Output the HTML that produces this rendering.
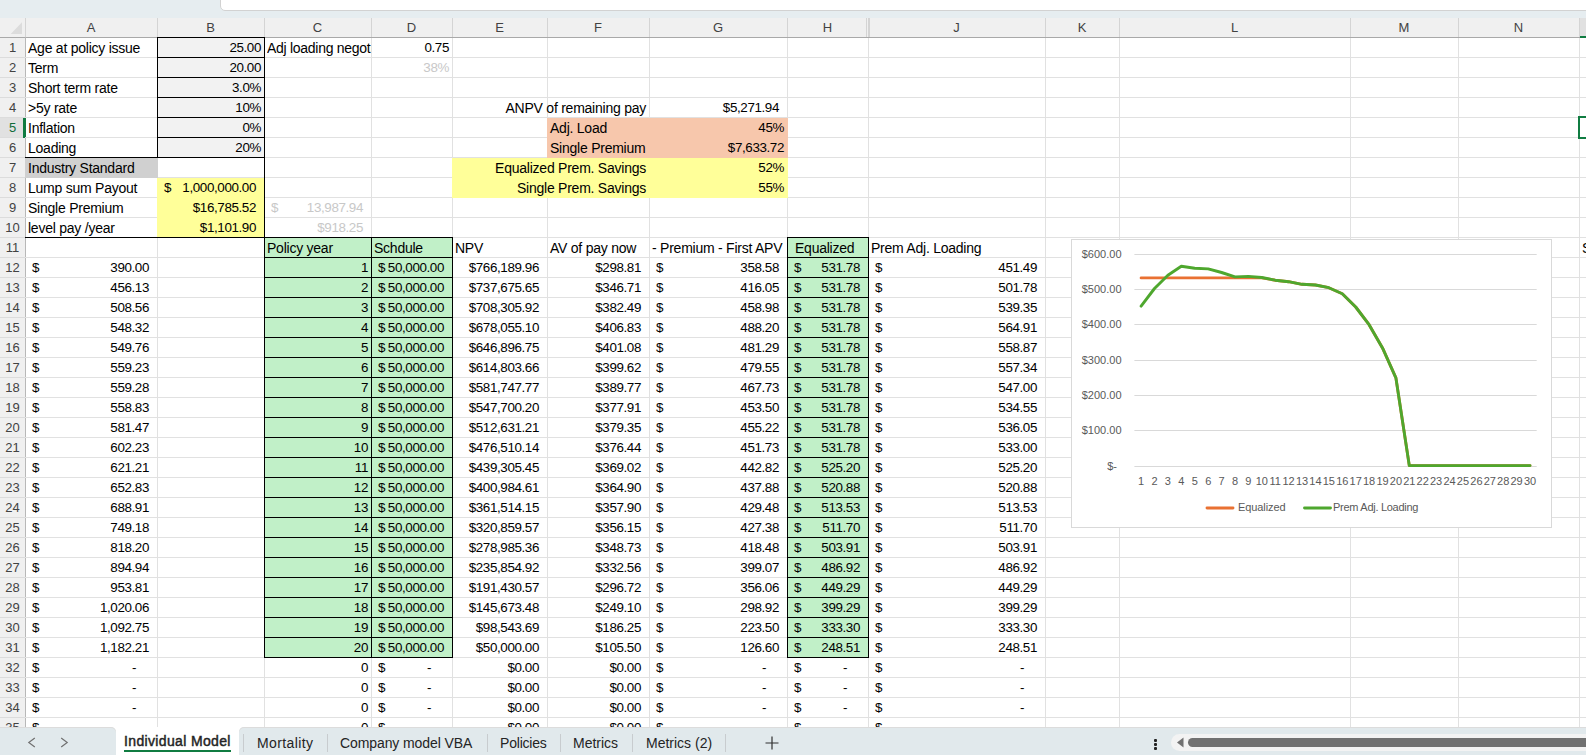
<!DOCTYPE html>
<html><head><meta charset="utf-8"><style>
html,body{margin:0;padding:0}
body{width:1586px;height:755px;overflow:hidden;position:relative;background:#fff;font-family:"Liberation Sans",sans-serif;}
.f{position:absolute}
.t{position:absolute;height:20px;line-height:20px;font-size:13.4px;white-space:nowrap;color:#000}
.ch{position:absolute;top:18px;height:19px;line-height:19px;text-align:center;font-size:13px;color:#424242}
.rh{position:absolute;left:0;width:25px;height:20px;line-height:20px;text-align:center;font-size:13px;color:#424242}
.rh.sel{color:#0f6b38}
.ax{font-family:"Liberation Sans",sans-serif;font-size:11px;fill:#595959}
.tab{position:absolute;top:727px;height:28px;line-height:28px;font-size:14px;color:#242424}
</style></head><body>
<div class="f" style="left:0;top:0;width:1586px;height:18px;background:#e6edf0"></div>
<div class="f" style="left:220px;top:-6px;width:1380px;height:15px;background:#fff;border:1px solid #d2d2d2;border-radius:5px"></div>
<div class="f" style="left:0;top:18px;width:1586px;height:19px;background:#f0f0f0"></div>
<div class="f" style="left:0;top:37px;width:1586px;height:1px;background:#a9a9a9"></div>
<div class="f" style="left:0;top:38px;width:25px;height:689px;background:#f0f0f0"></div>
<div class="f" style="left:25px;top:18px;width:1px;height:19px;background:#d4d4d4"></div>
<div class="f" style="left:25px;top:37px;width:1px;height:690px;background:#b8b8b8"></div>
<svg class="f" style="left:0;top:18px" width="25" height="19"><path d="M22 4.3 L22 16 L10.7 16 Z" fill="#dcdcdc"/></svg>
<div class="ch" style="left:25px;width:132px">A</div><div class="ch" style="left:157px;width:107px">B</div><div class="f" style="left:157px;top:18px;width:1px;height:19px;background:#d4d4d4"></div><div class="ch" style="left:264px;width:107px">C</div><div class="f" style="left:264px;top:18px;width:1px;height:19px;background:#d4d4d4"></div><div class="ch" style="left:371px;width:81px">D</div><div class="f" style="left:371px;top:18px;width:1px;height:19px;background:#d4d4d4"></div><div class="ch" style="left:452px;width:95px">E</div><div class="f" style="left:452px;top:18px;width:1px;height:19px;background:#d4d4d4"></div><div class="ch" style="left:547px;width:102px">F</div><div class="f" style="left:547px;top:18px;width:1px;height:19px;background:#d4d4d4"></div><div class="ch" style="left:649px;width:138px">G</div><div class="f" style="left:649px;top:18px;width:1px;height:19px;background:#d4d4d4"></div><div class="ch" style="left:787px;width:81px">H</div><div class="f" style="left:787px;top:18px;width:1px;height:19px;background:#d4d4d4"></div><div class="ch" style="left:868px;width:177px">J</div><div class="f" style="left:868px;top:18px;width:1px;height:19px;background:#d4d4d4"></div><div class="ch" style="left:1045px;width:74px">K</div><div class="f" style="left:1045px;top:18px;width:1px;height:19px;background:#d4d4d4"></div><div class="ch" style="left:1119px;width:231px">L</div><div class="f" style="left:1119px;top:18px;width:1px;height:19px;background:#d4d4d4"></div><div class="ch" style="left:1350px;width:108px">M</div><div class="f" style="left:1350px;top:18px;width:1px;height:19px;background:#d4d4d4"></div><div class="ch" style="left:1458px;width:121px">N</div><div class="f" style="left:1458px;top:18px;width:1px;height:19px;background:#d4d4d4"></div><div class="f" style="left:1579px;top:18px;width:1px;height:19px;background:#d4d4d4"></div><div class="f" style="left:1580px;top:18px;width:6px;height:19px;background:#e1e1e1"></div><div class="f" style="left:1580px;top:36px;width:6px;height:2px;background:#107c41"></div><div class="f" style="left:866px;top:18px;width:1px;height:19px;background:#d4d4d4"></div><div class="f" style="left:869px;top:18px;width:1px;height:19px;background:#d4d4d4"></div>
<div class="rh" style="top:38px">1</div><div class="f" style="left:0;top:57px;width:25px;height:1px;background:#dcdcdc"></div><div class="rh" style="top:58px">2</div><div class="f" style="left:0;top:77px;width:25px;height:1px;background:#dcdcdc"></div><div class="rh" style="top:78px">3</div><div class="f" style="left:0;top:97px;width:25px;height:1px;background:#dcdcdc"></div><div class="rh" style="top:98px">4</div><div class="f" style="left:0;top:117px;width:25px;height:1px;background:#dcdcdc"></div><div class="f" style="left:0;top:118px;width:25px;height:19px;background:#e1e1e1"></div><div class="rh sel" style="top:118px">5</div><div class="f" style="left:0;top:137px;width:25px;height:1px;background:#dcdcdc"></div><div class="rh" style="top:138px">6</div><div class="f" style="left:0;top:157px;width:25px;height:1px;background:#dcdcdc"></div><div class="rh" style="top:158px">7</div><div class="f" style="left:0;top:177px;width:25px;height:1px;background:#dcdcdc"></div><div class="rh" style="top:178px">8</div><div class="f" style="left:0;top:197px;width:25px;height:1px;background:#dcdcdc"></div><div class="rh" style="top:198px">9</div><div class="f" style="left:0;top:217px;width:25px;height:1px;background:#dcdcdc"></div><div class="rh" style="top:218px">10</div><div class="f" style="left:0;top:237px;width:25px;height:1px;background:#dcdcdc"></div><div class="rh" style="top:238px">11</div><div class="f" style="left:0;top:257px;width:25px;height:1px;background:#dcdcdc"></div><div class="rh" style="top:258px">12</div><div class="f" style="left:0;top:277px;width:25px;height:1px;background:#dcdcdc"></div><div class="rh" style="top:278px">13</div><div class="f" style="left:0;top:297px;width:25px;height:1px;background:#dcdcdc"></div><div class="rh" style="top:298px">14</div><div class="f" style="left:0;top:317px;width:25px;height:1px;background:#dcdcdc"></div><div class="rh" style="top:318px">15</div><div class="f" style="left:0;top:337px;width:25px;height:1px;background:#dcdcdc"></div><div class="rh" style="top:338px">16</div><div class="f" style="left:0;top:357px;width:25px;height:1px;background:#dcdcdc"></div><div class="rh" style="top:358px">17</div><div class="f" style="left:0;top:377px;width:25px;height:1px;background:#dcdcdc"></div><div class="rh" style="top:378px">18</div><div class="f" style="left:0;top:397px;width:25px;height:1px;background:#dcdcdc"></div><div class="rh" style="top:398px">19</div><div class="f" style="left:0;top:417px;width:25px;height:1px;background:#dcdcdc"></div><div class="rh" style="top:418px">20</div><div class="f" style="left:0;top:437px;width:25px;height:1px;background:#dcdcdc"></div><div class="rh" style="top:438px">21</div><div class="f" style="left:0;top:457px;width:25px;height:1px;background:#dcdcdc"></div><div class="rh" style="top:458px">22</div><div class="f" style="left:0;top:477px;width:25px;height:1px;background:#dcdcdc"></div><div class="rh" style="top:478px">23</div><div class="f" style="left:0;top:497px;width:25px;height:1px;background:#dcdcdc"></div><div class="rh" style="top:498px">24</div><div class="f" style="left:0;top:517px;width:25px;height:1px;background:#dcdcdc"></div><div class="rh" style="top:518px">25</div><div class="f" style="left:0;top:537px;width:25px;height:1px;background:#dcdcdc"></div><div class="rh" style="top:538px">26</div><div class="f" style="left:0;top:557px;width:25px;height:1px;background:#dcdcdc"></div><div class="rh" style="top:558px">27</div><div class="f" style="left:0;top:577px;width:25px;height:1px;background:#dcdcdc"></div><div class="rh" style="top:578px">28</div><div class="f" style="left:0;top:597px;width:25px;height:1px;background:#dcdcdc"></div><div class="rh" style="top:598px">29</div><div class="f" style="left:0;top:617px;width:25px;height:1px;background:#dcdcdc"></div><div class="rh" style="top:618px">30</div><div class="f" style="left:0;top:637px;width:25px;height:1px;background:#dcdcdc"></div><div class="rh" style="top:638px">31</div><div class="f" style="left:0;top:657px;width:25px;height:1px;background:#dcdcdc"></div><div class="rh" style="top:658px">32</div><div class="f" style="left:0;top:677px;width:25px;height:1px;background:#dcdcdc"></div><div class="rh" style="top:678px">33</div><div class="f" style="left:0;top:697px;width:25px;height:1px;background:#dcdcdc"></div><div class="rh" style="top:698px">34</div><div class="f" style="left:0;top:717px;width:25px;height:1px;background:#dcdcdc"></div><div class="rh" style="top:718px">35</div><div class="f" style="left:0;top:737px;width:25px;height:1px;background:#dcdcdc"></div><div class="f" style="left:23px;top:118px;width:3px;height:20px;background:#107c41"></div>
<div class="f" style="left:25px;top:57px;width:1562px;height:1px;background:#e1e1e1"></div>
<div class="f" style="left:25px;top:77px;width:1562px;height:1px;background:#e1e1e1"></div>
<div class="f" style="left:25px;top:97px;width:1562px;height:1px;background:#e1e1e1"></div>
<div class="f" style="left:25px;top:117px;width:1562px;height:1px;background:#e1e1e1"></div>
<div class="f" style="left:25px;top:137px;width:1562px;height:1px;background:#e1e1e1"></div>
<div class="f" style="left:25px;top:157px;width:1562px;height:1px;background:#e1e1e1"></div>
<div class="f" style="left:25px;top:177px;width:1562px;height:1px;background:#e1e1e1"></div>
<div class="f" style="left:25px;top:197px;width:1562px;height:1px;background:#e1e1e1"></div>
<div class="f" style="left:25px;top:217px;width:1562px;height:1px;background:#e1e1e1"></div>
<div class="f" style="left:25px;top:237px;width:1562px;height:1px;background:#e1e1e1"></div>
<div class="f" style="left:25px;top:257px;width:1562px;height:1px;background:#e1e1e1"></div>
<div class="f" style="left:25px;top:277px;width:1562px;height:1px;background:#e1e1e1"></div>
<div class="f" style="left:25px;top:297px;width:1562px;height:1px;background:#e1e1e1"></div>
<div class="f" style="left:25px;top:317px;width:1562px;height:1px;background:#e1e1e1"></div>
<div class="f" style="left:25px;top:337px;width:1562px;height:1px;background:#e1e1e1"></div>
<div class="f" style="left:25px;top:357px;width:1562px;height:1px;background:#e1e1e1"></div>
<div class="f" style="left:25px;top:377px;width:1562px;height:1px;background:#e1e1e1"></div>
<div class="f" style="left:25px;top:397px;width:1562px;height:1px;background:#e1e1e1"></div>
<div class="f" style="left:25px;top:417px;width:1562px;height:1px;background:#e1e1e1"></div>
<div class="f" style="left:25px;top:437px;width:1562px;height:1px;background:#e1e1e1"></div>
<div class="f" style="left:25px;top:457px;width:1562px;height:1px;background:#e1e1e1"></div>
<div class="f" style="left:25px;top:477px;width:1562px;height:1px;background:#e1e1e1"></div>
<div class="f" style="left:25px;top:497px;width:1562px;height:1px;background:#e1e1e1"></div>
<div class="f" style="left:25px;top:517px;width:1562px;height:1px;background:#e1e1e1"></div>
<div class="f" style="left:25px;top:537px;width:1562px;height:1px;background:#e1e1e1"></div>
<div class="f" style="left:25px;top:557px;width:1562px;height:1px;background:#e1e1e1"></div>
<div class="f" style="left:25px;top:577px;width:1562px;height:1px;background:#e1e1e1"></div>
<div class="f" style="left:25px;top:597px;width:1562px;height:1px;background:#e1e1e1"></div>
<div class="f" style="left:25px;top:617px;width:1562px;height:1px;background:#e1e1e1"></div>
<div class="f" style="left:25px;top:637px;width:1562px;height:1px;background:#e1e1e1"></div>
<div class="f" style="left:25px;top:657px;width:1562px;height:1px;background:#e1e1e1"></div>
<div class="f" style="left:25px;top:677px;width:1562px;height:1px;background:#e1e1e1"></div>
<div class="f" style="left:25px;top:697px;width:1562px;height:1px;background:#e1e1e1"></div>
<div class="f" style="left:25px;top:717px;width:1562px;height:1px;background:#e1e1e1"></div>
<div class="f" style="left:25px;top:737px;width:1562px;height:1px;background:#e1e1e1"></div>
<div class="f" style="left:157px;top:38px;width:1px;height:690px;background:#e1e1e1"></div>
<div class="f" style="left:264px;top:38px;width:1px;height:690px;background:#e1e1e1"></div>
<div class="f" style="left:371px;top:38px;width:1px;height:690px;background:#e1e1e1"></div>
<div class="f" style="left:452px;top:38px;width:1px;height:690px;background:#e1e1e1"></div>
<div class="f" style="left:547px;top:38px;width:1px;height:690px;background:#e1e1e1"></div>
<div class="f" style="left:649px;top:38px;width:1px;height:690px;background:#e1e1e1"></div>
<div class="f" style="left:787px;top:38px;width:1px;height:690px;background:#e1e1e1"></div>
<div class="f" style="left:868px;top:38px;width:1px;height:690px;background:#e1e1e1"></div>
<div class="f" style="left:1045px;top:38px;width:1px;height:690px;background:#e1e1e1"></div>
<div class="f" style="left:1119px;top:38px;width:1px;height:690px;background:#e1e1e1"></div>
<div class="f" style="left:1350px;top:38px;width:1px;height:690px;background:#e1e1e1"></div>
<div class="f" style="left:1458px;top:38px;width:1px;height:690px;background:#e1e1e1"></div>
<div class="f" style="left:1579px;top:38px;width:1px;height:690px;background:#e1e1e1"></div>
<div class="f" style="left:157px;top:38px;width:108px;height:20px;background:#f2f2f2"></div>
<div class="f" style="left:157px;top:58px;width:108px;height:20px;background:#f2f2f2"></div>
<div class="f" style="left:157px;top:78px;width:108px;height:20px;background:#f2f2f2"></div>
<div class="f" style="left:157px;top:98px;width:108px;height:20px;background:#f2f2f2"></div>
<div class="f" style="left:157px;top:118px;width:108px;height:20px;background:#f2f2f2"></div>
<div class="f" style="left:157px;top:138px;width:108px;height:20px;background:#f2f2f2"></div>
<div class="f" style="left:25px;top:158px;width:133px;height:20px;background:#d0d0d0"></div>
<div class="f" style="left:157px;top:178px;width:108px;height:60px;background:#ffff99"></div>
<div class="f" style="left:547px;top:118px;width:241px;height:40px;background:#f7c7ac"></div>
<div class="f" style="left:452px;top:158px;width:336px;height:40px;background:#ffff99"></div>
<div class="f" style="left:264px;top:238px;width:189px;height:420px;background:#c1f0c8"></div>
<div class="f" style="left:787px;top:238px;width:82px;height:420px;background:#c1f0c8"></div>
<div class="f" style="left:157px;top:37px;width:108px;height:1px;background:#000"></div>
<div class="f" style="left:157px;top:57px;width:108px;height:1px;background:#000"></div>
<div class="f" style="left:157px;top:37px;width:1px;height:21px;background:#000"></div>
<div class="f" style="left:264px;top:37px;width:1px;height:21px;background:#000"></div>
<div class="f" style="left:157px;top:57px;width:108px;height:1px;background:#000"></div>
<div class="f" style="left:157px;top:77px;width:108px;height:1px;background:#000"></div>
<div class="f" style="left:157px;top:57px;width:1px;height:21px;background:#000"></div>
<div class="f" style="left:264px;top:57px;width:1px;height:21px;background:#000"></div>
<div class="f" style="left:157px;top:77px;width:108px;height:1px;background:#000"></div>
<div class="f" style="left:157px;top:97px;width:108px;height:1px;background:#000"></div>
<div class="f" style="left:157px;top:77px;width:1px;height:21px;background:#000"></div>
<div class="f" style="left:264px;top:77px;width:1px;height:21px;background:#000"></div>
<div class="f" style="left:157px;top:97px;width:108px;height:1px;background:#000"></div>
<div class="f" style="left:157px;top:117px;width:108px;height:1px;background:#000"></div>
<div class="f" style="left:157px;top:97px;width:1px;height:21px;background:#000"></div>
<div class="f" style="left:264px;top:97px;width:1px;height:21px;background:#000"></div>
<div class="f" style="left:157px;top:117px;width:108px;height:1px;background:#000"></div>
<div class="f" style="left:157px;top:137px;width:108px;height:1px;background:#000"></div>
<div class="f" style="left:157px;top:117px;width:1px;height:21px;background:#000"></div>
<div class="f" style="left:264px;top:117px;width:1px;height:21px;background:#000"></div>
<div class="f" style="left:157px;top:137px;width:108px;height:1px;background:#000"></div>
<div class="f" style="left:157px;top:157px;width:108px;height:1px;background:#000"></div>
<div class="f" style="left:157px;top:137px;width:1px;height:21px;background:#000"></div>
<div class="f" style="left:264px;top:137px;width:1px;height:21px;background:#000"></div>
<div class="f" style="left:25px;top:157px;width:240px;height:1px;background:#000"></div>
<div class="f" style="left:25px;top:237px;width:240px;height:1px;background:#000"></div>
<div class="f" style="left:264px;top:157px;width:1px;height:81px;background:#000"></div>
<div class="f" style="left:264px;top:237px;width:108px;height:1px;background:#000"></div>
<div class="f" style="left:264px;top:257px;width:108px;height:1px;background:#000"></div>
<div class="f" style="left:264px;top:237px;width:1px;height:21px;background:#000"></div>
<div class="f" style="left:371px;top:237px;width:1px;height:21px;background:#000"></div>
<div class="f" style="left:371px;top:237px;width:82px;height:1px;background:#000"></div>
<div class="f" style="left:371px;top:257px;width:82px;height:1px;background:#000"></div>
<div class="f" style="left:371px;top:237px;width:1px;height:21px;background:#000"></div>
<div class="f" style="left:452px;top:237px;width:1px;height:21px;background:#000"></div>
<div class="f" style="left:787px;top:237px;width:82px;height:1px;background:#000"></div>
<div class="f" style="left:787px;top:257px;width:82px;height:1px;background:#000"></div>
<div class="f" style="left:787px;top:237px;width:1px;height:21px;background:#000"></div>
<div class="f" style="left:868px;top:237px;width:1px;height:21px;background:#000"></div>
<div class="f" style="left:264px;top:257px;width:108px;height:1px;background:#000"></div>
<div class="f" style="left:264px;top:277px;width:108px;height:1px;background:#000"></div>
<div class="f" style="left:264px;top:257px;width:1px;height:21px;background:#000"></div>
<div class="f" style="left:371px;top:257px;width:1px;height:21px;background:#000"></div>
<div class="f" style="left:371px;top:257px;width:82px;height:1px;background:#000"></div>
<div class="f" style="left:371px;top:277px;width:82px;height:1px;background:#000"></div>
<div class="f" style="left:371px;top:257px;width:1px;height:21px;background:#000"></div>
<div class="f" style="left:452px;top:257px;width:1px;height:21px;background:#000"></div>
<div class="f" style="left:787px;top:257px;width:82px;height:1px;background:#000"></div>
<div class="f" style="left:787px;top:277px;width:82px;height:1px;background:#000"></div>
<div class="f" style="left:787px;top:257px;width:1px;height:21px;background:#000"></div>
<div class="f" style="left:868px;top:257px;width:1px;height:21px;background:#000"></div>
<div class="f" style="left:264px;top:277px;width:108px;height:1px;background:#000"></div>
<div class="f" style="left:264px;top:297px;width:108px;height:1px;background:#000"></div>
<div class="f" style="left:264px;top:277px;width:1px;height:21px;background:#000"></div>
<div class="f" style="left:371px;top:277px;width:1px;height:21px;background:#000"></div>
<div class="f" style="left:371px;top:277px;width:82px;height:1px;background:#000"></div>
<div class="f" style="left:371px;top:297px;width:82px;height:1px;background:#000"></div>
<div class="f" style="left:371px;top:277px;width:1px;height:21px;background:#000"></div>
<div class="f" style="left:452px;top:277px;width:1px;height:21px;background:#000"></div>
<div class="f" style="left:787px;top:277px;width:82px;height:1px;background:#000"></div>
<div class="f" style="left:787px;top:297px;width:82px;height:1px;background:#000"></div>
<div class="f" style="left:787px;top:277px;width:1px;height:21px;background:#000"></div>
<div class="f" style="left:868px;top:277px;width:1px;height:21px;background:#000"></div>
<div class="f" style="left:264px;top:297px;width:108px;height:1px;background:#000"></div>
<div class="f" style="left:264px;top:317px;width:108px;height:1px;background:#000"></div>
<div class="f" style="left:264px;top:297px;width:1px;height:21px;background:#000"></div>
<div class="f" style="left:371px;top:297px;width:1px;height:21px;background:#000"></div>
<div class="f" style="left:371px;top:297px;width:82px;height:1px;background:#000"></div>
<div class="f" style="left:371px;top:317px;width:82px;height:1px;background:#000"></div>
<div class="f" style="left:371px;top:297px;width:1px;height:21px;background:#000"></div>
<div class="f" style="left:452px;top:297px;width:1px;height:21px;background:#000"></div>
<div class="f" style="left:787px;top:297px;width:82px;height:1px;background:#000"></div>
<div class="f" style="left:787px;top:317px;width:82px;height:1px;background:#000"></div>
<div class="f" style="left:787px;top:297px;width:1px;height:21px;background:#000"></div>
<div class="f" style="left:868px;top:297px;width:1px;height:21px;background:#000"></div>
<div class="f" style="left:264px;top:317px;width:108px;height:1px;background:#000"></div>
<div class="f" style="left:264px;top:337px;width:108px;height:1px;background:#000"></div>
<div class="f" style="left:264px;top:317px;width:1px;height:21px;background:#000"></div>
<div class="f" style="left:371px;top:317px;width:1px;height:21px;background:#000"></div>
<div class="f" style="left:371px;top:317px;width:82px;height:1px;background:#000"></div>
<div class="f" style="left:371px;top:337px;width:82px;height:1px;background:#000"></div>
<div class="f" style="left:371px;top:317px;width:1px;height:21px;background:#000"></div>
<div class="f" style="left:452px;top:317px;width:1px;height:21px;background:#000"></div>
<div class="f" style="left:787px;top:317px;width:82px;height:1px;background:#000"></div>
<div class="f" style="left:787px;top:337px;width:82px;height:1px;background:#000"></div>
<div class="f" style="left:787px;top:317px;width:1px;height:21px;background:#000"></div>
<div class="f" style="left:868px;top:317px;width:1px;height:21px;background:#000"></div>
<div class="f" style="left:264px;top:337px;width:108px;height:1px;background:#000"></div>
<div class="f" style="left:264px;top:357px;width:108px;height:1px;background:#000"></div>
<div class="f" style="left:264px;top:337px;width:1px;height:21px;background:#000"></div>
<div class="f" style="left:371px;top:337px;width:1px;height:21px;background:#000"></div>
<div class="f" style="left:371px;top:337px;width:82px;height:1px;background:#000"></div>
<div class="f" style="left:371px;top:357px;width:82px;height:1px;background:#000"></div>
<div class="f" style="left:371px;top:337px;width:1px;height:21px;background:#000"></div>
<div class="f" style="left:452px;top:337px;width:1px;height:21px;background:#000"></div>
<div class="f" style="left:787px;top:337px;width:82px;height:1px;background:#000"></div>
<div class="f" style="left:787px;top:357px;width:82px;height:1px;background:#000"></div>
<div class="f" style="left:787px;top:337px;width:1px;height:21px;background:#000"></div>
<div class="f" style="left:868px;top:337px;width:1px;height:21px;background:#000"></div>
<div class="f" style="left:264px;top:357px;width:108px;height:1px;background:#000"></div>
<div class="f" style="left:264px;top:377px;width:108px;height:1px;background:#000"></div>
<div class="f" style="left:264px;top:357px;width:1px;height:21px;background:#000"></div>
<div class="f" style="left:371px;top:357px;width:1px;height:21px;background:#000"></div>
<div class="f" style="left:371px;top:357px;width:82px;height:1px;background:#000"></div>
<div class="f" style="left:371px;top:377px;width:82px;height:1px;background:#000"></div>
<div class="f" style="left:371px;top:357px;width:1px;height:21px;background:#000"></div>
<div class="f" style="left:452px;top:357px;width:1px;height:21px;background:#000"></div>
<div class="f" style="left:787px;top:357px;width:82px;height:1px;background:#000"></div>
<div class="f" style="left:787px;top:377px;width:82px;height:1px;background:#000"></div>
<div class="f" style="left:787px;top:357px;width:1px;height:21px;background:#000"></div>
<div class="f" style="left:868px;top:357px;width:1px;height:21px;background:#000"></div>
<div class="f" style="left:264px;top:377px;width:108px;height:1px;background:#000"></div>
<div class="f" style="left:264px;top:397px;width:108px;height:1px;background:#000"></div>
<div class="f" style="left:264px;top:377px;width:1px;height:21px;background:#000"></div>
<div class="f" style="left:371px;top:377px;width:1px;height:21px;background:#000"></div>
<div class="f" style="left:371px;top:377px;width:82px;height:1px;background:#000"></div>
<div class="f" style="left:371px;top:397px;width:82px;height:1px;background:#000"></div>
<div class="f" style="left:371px;top:377px;width:1px;height:21px;background:#000"></div>
<div class="f" style="left:452px;top:377px;width:1px;height:21px;background:#000"></div>
<div class="f" style="left:787px;top:377px;width:82px;height:1px;background:#000"></div>
<div class="f" style="left:787px;top:397px;width:82px;height:1px;background:#000"></div>
<div class="f" style="left:787px;top:377px;width:1px;height:21px;background:#000"></div>
<div class="f" style="left:868px;top:377px;width:1px;height:21px;background:#000"></div>
<div class="f" style="left:264px;top:397px;width:108px;height:1px;background:#000"></div>
<div class="f" style="left:264px;top:417px;width:108px;height:1px;background:#000"></div>
<div class="f" style="left:264px;top:397px;width:1px;height:21px;background:#000"></div>
<div class="f" style="left:371px;top:397px;width:1px;height:21px;background:#000"></div>
<div class="f" style="left:371px;top:397px;width:82px;height:1px;background:#000"></div>
<div class="f" style="left:371px;top:417px;width:82px;height:1px;background:#000"></div>
<div class="f" style="left:371px;top:397px;width:1px;height:21px;background:#000"></div>
<div class="f" style="left:452px;top:397px;width:1px;height:21px;background:#000"></div>
<div class="f" style="left:787px;top:397px;width:82px;height:1px;background:#000"></div>
<div class="f" style="left:787px;top:417px;width:82px;height:1px;background:#000"></div>
<div class="f" style="left:787px;top:397px;width:1px;height:21px;background:#000"></div>
<div class="f" style="left:868px;top:397px;width:1px;height:21px;background:#000"></div>
<div class="f" style="left:264px;top:417px;width:108px;height:1px;background:#000"></div>
<div class="f" style="left:264px;top:437px;width:108px;height:1px;background:#000"></div>
<div class="f" style="left:264px;top:417px;width:1px;height:21px;background:#000"></div>
<div class="f" style="left:371px;top:417px;width:1px;height:21px;background:#000"></div>
<div class="f" style="left:371px;top:417px;width:82px;height:1px;background:#000"></div>
<div class="f" style="left:371px;top:437px;width:82px;height:1px;background:#000"></div>
<div class="f" style="left:371px;top:417px;width:1px;height:21px;background:#000"></div>
<div class="f" style="left:452px;top:417px;width:1px;height:21px;background:#000"></div>
<div class="f" style="left:787px;top:417px;width:82px;height:1px;background:#000"></div>
<div class="f" style="left:787px;top:437px;width:82px;height:1px;background:#000"></div>
<div class="f" style="left:787px;top:417px;width:1px;height:21px;background:#000"></div>
<div class="f" style="left:868px;top:417px;width:1px;height:21px;background:#000"></div>
<div class="f" style="left:264px;top:437px;width:108px;height:1px;background:#000"></div>
<div class="f" style="left:264px;top:457px;width:108px;height:1px;background:#000"></div>
<div class="f" style="left:264px;top:437px;width:1px;height:21px;background:#000"></div>
<div class="f" style="left:371px;top:437px;width:1px;height:21px;background:#000"></div>
<div class="f" style="left:371px;top:437px;width:82px;height:1px;background:#000"></div>
<div class="f" style="left:371px;top:457px;width:82px;height:1px;background:#000"></div>
<div class="f" style="left:371px;top:437px;width:1px;height:21px;background:#000"></div>
<div class="f" style="left:452px;top:437px;width:1px;height:21px;background:#000"></div>
<div class="f" style="left:787px;top:437px;width:82px;height:1px;background:#000"></div>
<div class="f" style="left:787px;top:457px;width:82px;height:1px;background:#000"></div>
<div class="f" style="left:787px;top:437px;width:1px;height:21px;background:#000"></div>
<div class="f" style="left:868px;top:437px;width:1px;height:21px;background:#000"></div>
<div class="f" style="left:264px;top:457px;width:108px;height:1px;background:#000"></div>
<div class="f" style="left:264px;top:477px;width:108px;height:1px;background:#000"></div>
<div class="f" style="left:264px;top:457px;width:1px;height:21px;background:#000"></div>
<div class="f" style="left:371px;top:457px;width:1px;height:21px;background:#000"></div>
<div class="f" style="left:371px;top:457px;width:82px;height:1px;background:#000"></div>
<div class="f" style="left:371px;top:477px;width:82px;height:1px;background:#000"></div>
<div class="f" style="left:371px;top:457px;width:1px;height:21px;background:#000"></div>
<div class="f" style="left:452px;top:457px;width:1px;height:21px;background:#000"></div>
<div class="f" style="left:787px;top:457px;width:82px;height:1px;background:#000"></div>
<div class="f" style="left:787px;top:477px;width:82px;height:1px;background:#000"></div>
<div class="f" style="left:787px;top:457px;width:1px;height:21px;background:#000"></div>
<div class="f" style="left:868px;top:457px;width:1px;height:21px;background:#000"></div>
<div class="f" style="left:264px;top:477px;width:108px;height:1px;background:#000"></div>
<div class="f" style="left:264px;top:497px;width:108px;height:1px;background:#000"></div>
<div class="f" style="left:264px;top:477px;width:1px;height:21px;background:#000"></div>
<div class="f" style="left:371px;top:477px;width:1px;height:21px;background:#000"></div>
<div class="f" style="left:371px;top:477px;width:82px;height:1px;background:#000"></div>
<div class="f" style="left:371px;top:497px;width:82px;height:1px;background:#000"></div>
<div class="f" style="left:371px;top:477px;width:1px;height:21px;background:#000"></div>
<div class="f" style="left:452px;top:477px;width:1px;height:21px;background:#000"></div>
<div class="f" style="left:787px;top:477px;width:82px;height:1px;background:#000"></div>
<div class="f" style="left:787px;top:497px;width:82px;height:1px;background:#000"></div>
<div class="f" style="left:787px;top:477px;width:1px;height:21px;background:#000"></div>
<div class="f" style="left:868px;top:477px;width:1px;height:21px;background:#000"></div>
<div class="f" style="left:264px;top:497px;width:108px;height:1px;background:#000"></div>
<div class="f" style="left:264px;top:517px;width:108px;height:1px;background:#000"></div>
<div class="f" style="left:264px;top:497px;width:1px;height:21px;background:#000"></div>
<div class="f" style="left:371px;top:497px;width:1px;height:21px;background:#000"></div>
<div class="f" style="left:371px;top:497px;width:82px;height:1px;background:#000"></div>
<div class="f" style="left:371px;top:517px;width:82px;height:1px;background:#000"></div>
<div class="f" style="left:371px;top:497px;width:1px;height:21px;background:#000"></div>
<div class="f" style="left:452px;top:497px;width:1px;height:21px;background:#000"></div>
<div class="f" style="left:787px;top:497px;width:82px;height:1px;background:#000"></div>
<div class="f" style="left:787px;top:517px;width:82px;height:1px;background:#000"></div>
<div class="f" style="left:787px;top:497px;width:1px;height:21px;background:#000"></div>
<div class="f" style="left:868px;top:497px;width:1px;height:21px;background:#000"></div>
<div class="f" style="left:264px;top:517px;width:108px;height:1px;background:#000"></div>
<div class="f" style="left:264px;top:537px;width:108px;height:1px;background:#000"></div>
<div class="f" style="left:264px;top:517px;width:1px;height:21px;background:#000"></div>
<div class="f" style="left:371px;top:517px;width:1px;height:21px;background:#000"></div>
<div class="f" style="left:371px;top:517px;width:82px;height:1px;background:#000"></div>
<div class="f" style="left:371px;top:537px;width:82px;height:1px;background:#000"></div>
<div class="f" style="left:371px;top:517px;width:1px;height:21px;background:#000"></div>
<div class="f" style="left:452px;top:517px;width:1px;height:21px;background:#000"></div>
<div class="f" style="left:787px;top:517px;width:82px;height:1px;background:#000"></div>
<div class="f" style="left:787px;top:537px;width:82px;height:1px;background:#000"></div>
<div class="f" style="left:787px;top:517px;width:1px;height:21px;background:#000"></div>
<div class="f" style="left:868px;top:517px;width:1px;height:21px;background:#000"></div>
<div class="f" style="left:264px;top:537px;width:108px;height:1px;background:#000"></div>
<div class="f" style="left:264px;top:557px;width:108px;height:1px;background:#000"></div>
<div class="f" style="left:264px;top:537px;width:1px;height:21px;background:#000"></div>
<div class="f" style="left:371px;top:537px;width:1px;height:21px;background:#000"></div>
<div class="f" style="left:371px;top:537px;width:82px;height:1px;background:#000"></div>
<div class="f" style="left:371px;top:557px;width:82px;height:1px;background:#000"></div>
<div class="f" style="left:371px;top:537px;width:1px;height:21px;background:#000"></div>
<div class="f" style="left:452px;top:537px;width:1px;height:21px;background:#000"></div>
<div class="f" style="left:787px;top:537px;width:82px;height:1px;background:#000"></div>
<div class="f" style="left:787px;top:557px;width:82px;height:1px;background:#000"></div>
<div class="f" style="left:787px;top:537px;width:1px;height:21px;background:#000"></div>
<div class="f" style="left:868px;top:537px;width:1px;height:21px;background:#000"></div>
<div class="f" style="left:264px;top:557px;width:108px;height:1px;background:#000"></div>
<div class="f" style="left:264px;top:577px;width:108px;height:1px;background:#000"></div>
<div class="f" style="left:264px;top:557px;width:1px;height:21px;background:#000"></div>
<div class="f" style="left:371px;top:557px;width:1px;height:21px;background:#000"></div>
<div class="f" style="left:371px;top:557px;width:82px;height:1px;background:#000"></div>
<div class="f" style="left:371px;top:577px;width:82px;height:1px;background:#000"></div>
<div class="f" style="left:371px;top:557px;width:1px;height:21px;background:#000"></div>
<div class="f" style="left:452px;top:557px;width:1px;height:21px;background:#000"></div>
<div class="f" style="left:787px;top:557px;width:82px;height:1px;background:#000"></div>
<div class="f" style="left:787px;top:577px;width:82px;height:1px;background:#000"></div>
<div class="f" style="left:787px;top:557px;width:1px;height:21px;background:#000"></div>
<div class="f" style="left:868px;top:557px;width:1px;height:21px;background:#000"></div>
<div class="f" style="left:264px;top:577px;width:108px;height:1px;background:#000"></div>
<div class="f" style="left:264px;top:597px;width:108px;height:1px;background:#000"></div>
<div class="f" style="left:264px;top:577px;width:1px;height:21px;background:#000"></div>
<div class="f" style="left:371px;top:577px;width:1px;height:21px;background:#000"></div>
<div class="f" style="left:371px;top:577px;width:82px;height:1px;background:#000"></div>
<div class="f" style="left:371px;top:597px;width:82px;height:1px;background:#000"></div>
<div class="f" style="left:371px;top:577px;width:1px;height:21px;background:#000"></div>
<div class="f" style="left:452px;top:577px;width:1px;height:21px;background:#000"></div>
<div class="f" style="left:787px;top:577px;width:82px;height:1px;background:#000"></div>
<div class="f" style="left:787px;top:597px;width:82px;height:1px;background:#000"></div>
<div class="f" style="left:787px;top:577px;width:1px;height:21px;background:#000"></div>
<div class="f" style="left:868px;top:577px;width:1px;height:21px;background:#000"></div>
<div class="f" style="left:264px;top:597px;width:108px;height:1px;background:#000"></div>
<div class="f" style="left:264px;top:617px;width:108px;height:1px;background:#000"></div>
<div class="f" style="left:264px;top:597px;width:1px;height:21px;background:#000"></div>
<div class="f" style="left:371px;top:597px;width:1px;height:21px;background:#000"></div>
<div class="f" style="left:371px;top:597px;width:82px;height:1px;background:#000"></div>
<div class="f" style="left:371px;top:617px;width:82px;height:1px;background:#000"></div>
<div class="f" style="left:371px;top:597px;width:1px;height:21px;background:#000"></div>
<div class="f" style="left:452px;top:597px;width:1px;height:21px;background:#000"></div>
<div class="f" style="left:787px;top:597px;width:82px;height:1px;background:#000"></div>
<div class="f" style="left:787px;top:617px;width:82px;height:1px;background:#000"></div>
<div class="f" style="left:787px;top:597px;width:1px;height:21px;background:#000"></div>
<div class="f" style="left:868px;top:597px;width:1px;height:21px;background:#000"></div>
<div class="f" style="left:264px;top:617px;width:108px;height:1px;background:#000"></div>
<div class="f" style="left:264px;top:637px;width:108px;height:1px;background:#000"></div>
<div class="f" style="left:264px;top:617px;width:1px;height:21px;background:#000"></div>
<div class="f" style="left:371px;top:617px;width:1px;height:21px;background:#000"></div>
<div class="f" style="left:371px;top:617px;width:82px;height:1px;background:#000"></div>
<div class="f" style="left:371px;top:637px;width:82px;height:1px;background:#000"></div>
<div class="f" style="left:371px;top:617px;width:1px;height:21px;background:#000"></div>
<div class="f" style="left:452px;top:617px;width:1px;height:21px;background:#000"></div>
<div class="f" style="left:787px;top:617px;width:82px;height:1px;background:#000"></div>
<div class="f" style="left:787px;top:637px;width:82px;height:1px;background:#000"></div>
<div class="f" style="left:787px;top:617px;width:1px;height:21px;background:#000"></div>
<div class="f" style="left:868px;top:617px;width:1px;height:21px;background:#000"></div>
<div class="f" style="left:264px;top:637px;width:108px;height:1px;background:#000"></div>
<div class="f" style="left:264px;top:657px;width:108px;height:1px;background:#000"></div>
<div class="f" style="left:264px;top:637px;width:1px;height:21px;background:#000"></div>
<div class="f" style="left:371px;top:637px;width:1px;height:21px;background:#000"></div>
<div class="f" style="left:371px;top:637px;width:82px;height:1px;background:#000"></div>
<div class="f" style="left:371px;top:657px;width:82px;height:1px;background:#000"></div>
<div class="f" style="left:371px;top:637px;width:1px;height:21px;background:#000"></div>
<div class="f" style="left:452px;top:637px;width:1px;height:21px;background:#000"></div>
<div class="f" style="left:787px;top:637px;width:82px;height:1px;background:#000"></div>
<div class="f" style="left:787px;top:657px;width:82px;height:1px;background:#000"></div>
<div class="f" style="left:787px;top:637px;width:1px;height:21px;background:#000"></div>
<div class="f" style="left:868px;top:637px;width:1px;height:21px;background:#000"></div>
<div class="t " style="left:28px;top:38px;font-size:14px;letter-spacing:-0.24px;">Age at policy issue</div>
<div class="t " style="left:28px;top:58px;font-size:14px;letter-spacing:-0.24px;">Term</div>
<div class="t " style="left:28px;top:78px;font-size:14px;letter-spacing:-0.24px;">Short term rate</div>
<div class="t " style="left:28px;top:98px;font-size:14px;letter-spacing:-0.24px;">&gt;5y rate</div>
<div class="t " style="left:28px;top:118px;font-size:14px;letter-spacing:-0.24px;">Inflation</div>
<div class="t " style="left:28px;top:138px;font-size:14px;letter-spacing:-0.24px;">Loading</div>
<div class="t " style="left:28px;top:158px;font-size:14px;letter-spacing:-0.24px;">Industry Standard</div>
<div class="t " style="left:28px;top:178px;font-size:14px;letter-spacing:-0.24px;">Lump sum Payout</div>
<div class="t " style="left:28px;top:198px;font-size:14px;letter-spacing:-0.24px;">Single Premium</div>
<div class="t " style="left:28px;top:218px;font-size:14px;letter-spacing:-0.24px;">level pay /year</div>
<div class="t " style="right:1325px;top:38px;letter-spacing:-0.38px;">25.00</div>
<div class="t " style="right:1325px;top:58px;letter-spacing:-0.38px;">20.00</div>
<div class="t " style="right:1325px;top:78px;letter-spacing:-0.38px;">3.0%</div>
<div class="t " style="right:1325px;top:98px;letter-spacing:-0.38px;">10%</div>
<div class="t " style="right:1325px;top:118px;letter-spacing:-0.38px;">0%</div>
<div class="t " style="right:1325px;top:138px;letter-spacing:-0.38px;">20%</div>
<div class="t " style="left:164px;top:178px;letter-spacing:-0.38px;">$</div>
<div class="t " style="right:1330px;top:178px;letter-spacing:-0.38px;">1,000,000.00</div>
<div class="t " style="right:1330px;top:198px;letter-spacing:-0.38px;">$16,785.52</div>
<div class="t " style="right:1330px;top:218px;letter-spacing:-0.38px;">$1,101.90</div>
<div class="t" style="left:267px;top:38px;width:104px;overflow:hidden;white-space:nowrap;font-size:14px;letter-spacing:-0.28px">Adj loading negotiated</div>
<div class="t " style="right:1137px;top:38px;letter-spacing:-0.38px;">0.75</div>
<div class="t " style="right:1137px;top:58px;letter-spacing:-0.38px;color:#c8c8c8;">38%</div>
<div class="t " style="left:271px;top:198px;letter-spacing:-0.38px;color:#c8c8c8;">$</div>
<div class="t " style="right:1223px;top:198px;letter-spacing:-0.38px;color:#c8c8c8;">13,987.94</div>
<div class="t " style="right:1223px;top:218px;letter-spacing:-0.38px;color:#c8c8c8;">$918.25</div>
<div class="t " style="right:940px;top:98px;font-size:14px;letter-spacing:-0.24px;">ANPV of remaining pay</div>
<div class="t " style="right:807px;top:98px;letter-spacing:-0.38px;">$5,271.94</div>
<div class="t " style="left:550px;top:118px;font-size:14px;letter-spacing:-0.24px;">Adj. Load</div>
<div class="t " style="right:802px;top:118px;letter-spacing:-0.38px;">45%</div>
<div class="t " style="left:550px;top:138px;font-size:14px;letter-spacing:-0.24px;">Single Premium</div>
<div class="t " style="right:802px;top:138px;letter-spacing:-0.38px;">$7,633.72</div>
<div class="t " style="right:940px;top:158px;font-size:14px;letter-spacing:-0.24px;">Equalized Prem. Savings</div>
<div class="t " style="right:802px;top:158px;letter-spacing:-0.38px;">52%</div>
<div class="t " style="right:940px;top:178px;font-size:14px;letter-spacing:-0.24px;">Single Prem. Savings</div>
<div class="t " style="right:802px;top:178px;letter-spacing:-0.38px;">55%</div>
<div class="t " style="left:267px;top:238px;font-size:14px;letter-spacing:-0.24px;">Policy year</div>
<div class="t " style="left:374px;top:238px;font-size:14px;letter-spacing:-0.24px;">Schdule</div>
<div class="t " style="left:455px;top:238px;font-size:14px;letter-spacing:-0.24px;">NPV</div>
<div class="t " style="left:550px;top:238px;font-size:14px;letter-spacing:-0.24px;">AV of pay now</div>
<div class="t " style="left:652px;top:238px;font-size:14px;letter-spacing:-0.24px;">- Premium - First APV</div>
<div class="t " style="left:795px;top:238px;font-size:14px;letter-spacing:-0.24px;">Equalized</div>
<div class="t " style="left:871px;top:238px;font-size:14px;letter-spacing:-0.24px;">Prem Adj. Loading</div>
<div class="t " style="left:1582px;top:238px;font-size:14px;letter-spacing:-0.24px;">S</div>
<div class="t " style="left:32px;top:258px;letter-spacing:-0.38px;">$</div>
<div class="t " style="right:1437px;top:258px;letter-spacing:-0.38px;">390.00</div>
<div class="t " style="right:1218px;top:258px;letter-spacing:-0.38px;">1</div>
<div class="t " style="left:378px;top:258px;letter-spacing:-0.38px;">$</div>
<div class="t " style="right:1142px;top:258px;letter-spacing:-0.38px;">50,000.00</div>
<div class="t " style="right:1047px;top:258px;letter-spacing:-0.38px;">$766,189.96</div>
<div class="t " style="right:945px;top:258px;letter-spacing:-0.38px;">$298.81</div>
<div class="t " style="left:656px;top:258px;letter-spacing:-0.38px;">$</div>
<div class="t " style="right:807px;top:258px;letter-spacing:-0.38px;">358.58</div>
<div class="t " style="left:794px;top:258px;letter-spacing:-0.38px;">$</div>
<div class="t " style="right:726px;top:258px;letter-spacing:-0.38px;">531.78</div>
<div class="t " style="left:875px;top:258px;letter-spacing:-0.38px;">$</div>
<div class="t " style="right:549px;top:258px;letter-spacing:-0.38px;">451.49</div>
<div class="t " style="left:32px;top:278px;letter-spacing:-0.38px;">$</div>
<div class="t " style="right:1437px;top:278px;letter-spacing:-0.38px;">456.13</div>
<div class="t " style="right:1218px;top:278px;letter-spacing:-0.38px;">2</div>
<div class="t " style="left:378px;top:278px;letter-spacing:-0.38px;">$</div>
<div class="t " style="right:1142px;top:278px;letter-spacing:-0.38px;">50,000.00</div>
<div class="t " style="right:1047px;top:278px;letter-spacing:-0.38px;">$737,675.65</div>
<div class="t " style="right:945px;top:278px;letter-spacing:-0.38px;">$346.71</div>
<div class="t " style="left:656px;top:278px;letter-spacing:-0.38px;">$</div>
<div class="t " style="right:807px;top:278px;letter-spacing:-0.38px;">416.05</div>
<div class="t " style="left:794px;top:278px;letter-spacing:-0.38px;">$</div>
<div class="t " style="right:726px;top:278px;letter-spacing:-0.38px;">531.78</div>
<div class="t " style="left:875px;top:278px;letter-spacing:-0.38px;">$</div>
<div class="t " style="right:549px;top:278px;letter-spacing:-0.38px;">501.78</div>
<div class="t " style="left:32px;top:298px;letter-spacing:-0.38px;">$</div>
<div class="t " style="right:1437px;top:298px;letter-spacing:-0.38px;">508.56</div>
<div class="t " style="right:1218px;top:298px;letter-spacing:-0.38px;">3</div>
<div class="t " style="left:378px;top:298px;letter-spacing:-0.38px;">$</div>
<div class="t " style="right:1142px;top:298px;letter-spacing:-0.38px;">50,000.00</div>
<div class="t " style="right:1047px;top:298px;letter-spacing:-0.38px;">$708,305.92</div>
<div class="t " style="right:945px;top:298px;letter-spacing:-0.38px;">$382.49</div>
<div class="t " style="left:656px;top:298px;letter-spacing:-0.38px;">$</div>
<div class="t " style="right:807px;top:298px;letter-spacing:-0.38px;">458.98</div>
<div class="t " style="left:794px;top:298px;letter-spacing:-0.38px;">$</div>
<div class="t " style="right:726px;top:298px;letter-spacing:-0.38px;">531.78</div>
<div class="t " style="left:875px;top:298px;letter-spacing:-0.38px;">$</div>
<div class="t " style="right:549px;top:298px;letter-spacing:-0.38px;">539.35</div>
<div class="t " style="left:32px;top:318px;letter-spacing:-0.38px;">$</div>
<div class="t " style="right:1437px;top:318px;letter-spacing:-0.38px;">548.32</div>
<div class="t " style="right:1218px;top:318px;letter-spacing:-0.38px;">4</div>
<div class="t " style="left:378px;top:318px;letter-spacing:-0.38px;">$</div>
<div class="t " style="right:1142px;top:318px;letter-spacing:-0.38px;">50,000.00</div>
<div class="t " style="right:1047px;top:318px;letter-spacing:-0.38px;">$678,055.10</div>
<div class="t " style="right:945px;top:318px;letter-spacing:-0.38px;">$406.83</div>
<div class="t " style="left:656px;top:318px;letter-spacing:-0.38px;">$</div>
<div class="t " style="right:807px;top:318px;letter-spacing:-0.38px;">488.20</div>
<div class="t " style="left:794px;top:318px;letter-spacing:-0.38px;">$</div>
<div class="t " style="right:726px;top:318px;letter-spacing:-0.38px;">531.78</div>
<div class="t " style="left:875px;top:318px;letter-spacing:-0.38px;">$</div>
<div class="t " style="right:549px;top:318px;letter-spacing:-0.38px;">564.91</div>
<div class="t " style="left:32px;top:338px;letter-spacing:-0.38px;">$</div>
<div class="t " style="right:1437px;top:338px;letter-spacing:-0.38px;">549.76</div>
<div class="t " style="right:1218px;top:338px;letter-spacing:-0.38px;">5</div>
<div class="t " style="left:378px;top:338px;letter-spacing:-0.38px;">$</div>
<div class="t " style="right:1142px;top:338px;letter-spacing:-0.38px;">50,000.00</div>
<div class="t " style="right:1047px;top:338px;letter-spacing:-0.38px;">$646,896.75</div>
<div class="t " style="right:945px;top:338px;letter-spacing:-0.38px;">$401.08</div>
<div class="t " style="left:656px;top:338px;letter-spacing:-0.38px;">$</div>
<div class="t " style="right:807px;top:338px;letter-spacing:-0.38px;">481.29</div>
<div class="t " style="left:794px;top:338px;letter-spacing:-0.38px;">$</div>
<div class="t " style="right:726px;top:338px;letter-spacing:-0.38px;">531.78</div>
<div class="t " style="left:875px;top:338px;letter-spacing:-0.38px;">$</div>
<div class="t " style="right:549px;top:338px;letter-spacing:-0.38px;">558.87</div>
<div class="t " style="left:32px;top:358px;letter-spacing:-0.38px;">$</div>
<div class="t " style="right:1437px;top:358px;letter-spacing:-0.38px;">559.23</div>
<div class="t " style="right:1218px;top:358px;letter-spacing:-0.38px;">6</div>
<div class="t " style="left:378px;top:358px;letter-spacing:-0.38px;">$</div>
<div class="t " style="right:1142px;top:358px;letter-spacing:-0.38px;">50,000.00</div>
<div class="t " style="right:1047px;top:358px;letter-spacing:-0.38px;">$614,803.66</div>
<div class="t " style="right:945px;top:358px;letter-spacing:-0.38px;">$399.62</div>
<div class="t " style="left:656px;top:358px;letter-spacing:-0.38px;">$</div>
<div class="t " style="right:807px;top:358px;letter-spacing:-0.38px;">479.55</div>
<div class="t " style="left:794px;top:358px;letter-spacing:-0.38px;">$</div>
<div class="t " style="right:726px;top:358px;letter-spacing:-0.38px;">531.78</div>
<div class="t " style="left:875px;top:358px;letter-spacing:-0.38px;">$</div>
<div class="t " style="right:549px;top:358px;letter-spacing:-0.38px;">557.34</div>
<div class="t " style="left:32px;top:378px;letter-spacing:-0.38px;">$</div>
<div class="t " style="right:1437px;top:378px;letter-spacing:-0.38px;">559.28</div>
<div class="t " style="right:1218px;top:378px;letter-spacing:-0.38px;">7</div>
<div class="t " style="left:378px;top:378px;letter-spacing:-0.38px;">$</div>
<div class="t " style="right:1142px;top:378px;letter-spacing:-0.38px;">50,000.00</div>
<div class="t " style="right:1047px;top:378px;letter-spacing:-0.38px;">$581,747.77</div>
<div class="t " style="right:945px;top:378px;letter-spacing:-0.38px;">$389.77</div>
<div class="t " style="left:656px;top:378px;letter-spacing:-0.38px;">$</div>
<div class="t " style="right:807px;top:378px;letter-spacing:-0.38px;">467.73</div>
<div class="t " style="left:794px;top:378px;letter-spacing:-0.38px;">$</div>
<div class="t " style="right:726px;top:378px;letter-spacing:-0.38px;">531.78</div>
<div class="t " style="left:875px;top:378px;letter-spacing:-0.38px;">$</div>
<div class="t " style="right:549px;top:378px;letter-spacing:-0.38px;">547.00</div>
<div class="t " style="left:32px;top:398px;letter-spacing:-0.38px;">$</div>
<div class="t " style="right:1437px;top:398px;letter-spacing:-0.38px;">558.83</div>
<div class="t " style="right:1218px;top:398px;letter-spacing:-0.38px;">8</div>
<div class="t " style="left:378px;top:398px;letter-spacing:-0.38px;">$</div>
<div class="t " style="right:1142px;top:398px;letter-spacing:-0.38px;">50,000.00</div>
<div class="t " style="right:1047px;top:398px;letter-spacing:-0.38px;">$547,700.20</div>
<div class="t " style="right:945px;top:398px;letter-spacing:-0.38px;">$377.91</div>
<div class="t " style="left:656px;top:398px;letter-spacing:-0.38px;">$</div>
<div class="t " style="right:807px;top:398px;letter-spacing:-0.38px;">453.50</div>
<div class="t " style="left:794px;top:398px;letter-spacing:-0.38px;">$</div>
<div class="t " style="right:726px;top:398px;letter-spacing:-0.38px;">531.78</div>
<div class="t " style="left:875px;top:398px;letter-spacing:-0.38px;">$</div>
<div class="t " style="right:549px;top:398px;letter-spacing:-0.38px;">534.55</div>
<div class="t " style="left:32px;top:418px;letter-spacing:-0.38px;">$</div>
<div class="t " style="right:1437px;top:418px;letter-spacing:-0.38px;">581.47</div>
<div class="t " style="right:1218px;top:418px;letter-spacing:-0.38px;">9</div>
<div class="t " style="left:378px;top:418px;letter-spacing:-0.38px;">$</div>
<div class="t " style="right:1142px;top:418px;letter-spacing:-0.38px;">50,000.00</div>
<div class="t " style="right:1047px;top:418px;letter-spacing:-0.38px;">$512,631.21</div>
<div class="t " style="right:945px;top:418px;letter-spacing:-0.38px;">$379.35</div>
<div class="t " style="left:656px;top:418px;letter-spacing:-0.38px;">$</div>
<div class="t " style="right:807px;top:418px;letter-spacing:-0.38px;">455.22</div>
<div class="t " style="left:794px;top:418px;letter-spacing:-0.38px;">$</div>
<div class="t " style="right:726px;top:418px;letter-spacing:-0.38px;">531.78</div>
<div class="t " style="left:875px;top:418px;letter-spacing:-0.38px;">$</div>
<div class="t " style="right:549px;top:418px;letter-spacing:-0.38px;">536.05</div>
<div class="t " style="left:32px;top:438px;letter-spacing:-0.38px;">$</div>
<div class="t " style="right:1437px;top:438px;letter-spacing:-0.38px;">602.23</div>
<div class="t " style="right:1218px;top:438px;letter-spacing:-0.38px;">10</div>
<div class="t " style="left:378px;top:438px;letter-spacing:-0.38px;">$</div>
<div class="t " style="right:1142px;top:438px;letter-spacing:-0.38px;">50,000.00</div>
<div class="t " style="right:1047px;top:438px;letter-spacing:-0.38px;">$476,510.14</div>
<div class="t " style="right:945px;top:438px;letter-spacing:-0.38px;">$376.44</div>
<div class="t " style="left:656px;top:438px;letter-spacing:-0.38px;">$</div>
<div class="t " style="right:807px;top:438px;letter-spacing:-0.38px;">451.73</div>
<div class="t " style="left:794px;top:438px;letter-spacing:-0.38px;">$</div>
<div class="t " style="right:726px;top:438px;letter-spacing:-0.38px;">531.78</div>
<div class="t " style="left:875px;top:438px;letter-spacing:-0.38px;">$</div>
<div class="t " style="right:549px;top:438px;letter-spacing:-0.38px;">533.00</div>
<div class="t " style="left:32px;top:458px;letter-spacing:-0.38px;">$</div>
<div class="t " style="right:1437px;top:458px;letter-spacing:-0.38px;">621.21</div>
<div class="t " style="right:1218px;top:458px;letter-spacing:-0.38px;">11</div>
<div class="t " style="left:378px;top:458px;letter-spacing:-0.38px;">$</div>
<div class="t " style="right:1142px;top:458px;letter-spacing:-0.38px;">50,000.00</div>
<div class="t " style="right:1047px;top:458px;letter-spacing:-0.38px;">$439,305.45</div>
<div class="t " style="right:945px;top:458px;letter-spacing:-0.38px;">$369.02</div>
<div class="t " style="left:656px;top:458px;letter-spacing:-0.38px;">$</div>
<div class="t " style="right:807px;top:458px;letter-spacing:-0.38px;">442.82</div>
<div class="t " style="left:794px;top:458px;letter-spacing:-0.38px;">$</div>
<div class="t " style="right:726px;top:458px;letter-spacing:-0.38px;">525.20</div>
<div class="t " style="left:875px;top:458px;letter-spacing:-0.38px;">$</div>
<div class="t " style="right:549px;top:458px;letter-spacing:-0.38px;">525.20</div>
<div class="t " style="left:32px;top:478px;letter-spacing:-0.38px;">$</div>
<div class="t " style="right:1437px;top:478px;letter-spacing:-0.38px;">652.83</div>
<div class="t " style="right:1218px;top:478px;letter-spacing:-0.38px;">12</div>
<div class="t " style="left:378px;top:478px;letter-spacing:-0.38px;">$</div>
<div class="t " style="right:1142px;top:478px;letter-spacing:-0.38px;">50,000.00</div>
<div class="t " style="right:1047px;top:478px;letter-spacing:-0.38px;">$400,984.61</div>
<div class="t " style="right:945px;top:478px;letter-spacing:-0.38px;">$364.90</div>
<div class="t " style="left:656px;top:478px;letter-spacing:-0.38px;">$</div>
<div class="t " style="right:807px;top:478px;letter-spacing:-0.38px;">437.88</div>
<div class="t " style="left:794px;top:478px;letter-spacing:-0.38px;">$</div>
<div class="t " style="right:726px;top:478px;letter-spacing:-0.38px;">520.88</div>
<div class="t " style="left:875px;top:478px;letter-spacing:-0.38px;">$</div>
<div class="t " style="right:549px;top:478px;letter-spacing:-0.38px;">520.88</div>
<div class="t " style="left:32px;top:498px;letter-spacing:-0.38px;">$</div>
<div class="t " style="right:1437px;top:498px;letter-spacing:-0.38px;">688.91</div>
<div class="t " style="right:1218px;top:498px;letter-spacing:-0.38px;">13</div>
<div class="t " style="left:378px;top:498px;letter-spacing:-0.38px;">$</div>
<div class="t " style="right:1142px;top:498px;letter-spacing:-0.38px;">50,000.00</div>
<div class="t " style="right:1047px;top:498px;letter-spacing:-0.38px;">$361,514.15</div>
<div class="t " style="right:945px;top:498px;letter-spacing:-0.38px;">$357.90</div>
<div class="t " style="left:656px;top:498px;letter-spacing:-0.38px;">$</div>
<div class="t " style="right:807px;top:498px;letter-spacing:-0.38px;">429.48</div>
<div class="t " style="left:794px;top:498px;letter-spacing:-0.38px;">$</div>
<div class="t " style="right:726px;top:498px;letter-spacing:-0.38px;">513.53</div>
<div class="t " style="left:875px;top:498px;letter-spacing:-0.38px;">$</div>
<div class="t " style="right:549px;top:498px;letter-spacing:-0.38px;">513.53</div>
<div class="t " style="left:32px;top:518px;letter-spacing:-0.38px;">$</div>
<div class="t " style="right:1437px;top:518px;letter-spacing:-0.38px;">749.18</div>
<div class="t " style="right:1218px;top:518px;letter-spacing:-0.38px;">14</div>
<div class="t " style="left:378px;top:518px;letter-spacing:-0.38px;">$</div>
<div class="t " style="right:1142px;top:518px;letter-spacing:-0.38px;">50,000.00</div>
<div class="t " style="right:1047px;top:518px;letter-spacing:-0.38px;">$320,859.57</div>
<div class="t " style="right:945px;top:518px;letter-spacing:-0.38px;">$356.15</div>
<div class="t " style="left:656px;top:518px;letter-spacing:-0.38px;">$</div>
<div class="t " style="right:807px;top:518px;letter-spacing:-0.38px;">427.38</div>
<div class="t " style="left:794px;top:518px;letter-spacing:-0.38px;">$</div>
<div class="t " style="right:726px;top:518px;letter-spacing:-0.38px;">511.70</div>
<div class="t " style="left:875px;top:518px;letter-spacing:-0.38px;">$</div>
<div class="t " style="right:549px;top:518px;letter-spacing:-0.38px;">511.70</div>
<div class="t " style="left:32px;top:538px;letter-spacing:-0.38px;">$</div>
<div class="t " style="right:1437px;top:538px;letter-spacing:-0.38px;">818.20</div>
<div class="t " style="right:1218px;top:538px;letter-spacing:-0.38px;">15</div>
<div class="t " style="left:378px;top:538px;letter-spacing:-0.38px;">$</div>
<div class="t " style="right:1142px;top:538px;letter-spacing:-0.38px;">50,000.00</div>
<div class="t " style="right:1047px;top:538px;letter-spacing:-0.38px;">$278,985.36</div>
<div class="t " style="right:945px;top:538px;letter-spacing:-0.38px;">$348.73</div>
<div class="t " style="left:656px;top:538px;letter-spacing:-0.38px;">$</div>
<div class="t " style="right:807px;top:538px;letter-spacing:-0.38px;">418.48</div>
<div class="t " style="left:794px;top:538px;letter-spacing:-0.38px;">$</div>
<div class="t " style="right:726px;top:538px;letter-spacing:-0.38px;">503.91</div>
<div class="t " style="left:875px;top:538px;letter-spacing:-0.38px;">$</div>
<div class="t " style="right:549px;top:538px;letter-spacing:-0.38px;">503.91</div>
<div class="t " style="left:32px;top:558px;letter-spacing:-0.38px;">$</div>
<div class="t " style="right:1437px;top:558px;letter-spacing:-0.38px;">894.94</div>
<div class="t " style="right:1218px;top:558px;letter-spacing:-0.38px;">16</div>
<div class="t " style="left:378px;top:558px;letter-spacing:-0.38px;">$</div>
<div class="t " style="right:1142px;top:558px;letter-spacing:-0.38px;">50,000.00</div>
<div class="t " style="right:1047px;top:558px;letter-spacing:-0.38px;">$235,854.92</div>
<div class="t " style="right:945px;top:558px;letter-spacing:-0.38px;">$332.56</div>
<div class="t " style="left:656px;top:558px;letter-spacing:-0.38px;">$</div>
<div class="t " style="right:807px;top:558px;letter-spacing:-0.38px;">399.07</div>
<div class="t " style="left:794px;top:558px;letter-spacing:-0.38px;">$</div>
<div class="t " style="right:726px;top:558px;letter-spacing:-0.38px;">486.92</div>
<div class="t " style="left:875px;top:558px;letter-spacing:-0.38px;">$</div>
<div class="t " style="right:549px;top:558px;letter-spacing:-0.38px;">486.92</div>
<div class="t " style="left:32px;top:578px;letter-spacing:-0.38px;">$</div>
<div class="t " style="right:1437px;top:578px;letter-spacing:-0.38px;">953.81</div>
<div class="t " style="right:1218px;top:578px;letter-spacing:-0.38px;">17</div>
<div class="t " style="left:378px;top:578px;letter-spacing:-0.38px;">$</div>
<div class="t " style="right:1142px;top:578px;letter-spacing:-0.38px;">50,000.00</div>
<div class="t " style="right:1047px;top:578px;letter-spacing:-0.38px;">$191,430.57</div>
<div class="t " style="right:945px;top:578px;letter-spacing:-0.38px;">$296.72</div>
<div class="t " style="left:656px;top:578px;letter-spacing:-0.38px;">$</div>
<div class="t " style="right:807px;top:578px;letter-spacing:-0.38px;">356.06</div>
<div class="t " style="left:794px;top:578px;letter-spacing:-0.38px;">$</div>
<div class="t " style="right:726px;top:578px;letter-spacing:-0.38px;">449.29</div>
<div class="t " style="left:875px;top:578px;letter-spacing:-0.38px;">$</div>
<div class="t " style="right:549px;top:578px;letter-spacing:-0.38px;">449.29</div>
<div class="t " style="left:32px;top:598px;letter-spacing:-0.38px;">$</div>
<div class="t " style="right:1437px;top:598px;letter-spacing:-0.38px;">1,020.06</div>
<div class="t " style="right:1218px;top:598px;letter-spacing:-0.38px;">18</div>
<div class="t " style="left:378px;top:598px;letter-spacing:-0.38px;">$</div>
<div class="t " style="right:1142px;top:598px;letter-spacing:-0.38px;">50,000.00</div>
<div class="t " style="right:1047px;top:598px;letter-spacing:-0.38px;">$145,673.48</div>
<div class="t " style="right:945px;top:598px;letter-spacing:-0.38px;">$249.10</div>
<div class="t " style="left:656px;top:598px;letter-spacing:-0.38px;">$</div>
<div class="t " style="right:807px;top:598px;letter-spacing:-0.38px;">298.92</div>
<div class="t " style="left:794px;top:598px;letter-spacing:-0.38px;">$</div>
<div class="t " style="right:726px;top:598px;letter-spacing:-0.38px;">399.29</div>
<div class="t " style="left:875px;top:598px;letter-spacing:-0.38px;">$</div>
<div class="t " style="right:549px;top:598px;letter-spacing:-0.38px;">399.29</div>
<div class="t " style="left:32px;top:618px;letter-spacing:-0.38px;">$</div>
<div class="t " style="right:1437px;top:618px;letter-spacing:-0.38px;">1,092.75</div>
<div class="t " style="right:1218px;top:618px;letter-spacing:-0.38px;">19</div>
<div class="t " style="left:378px;top:618px;letter-spacing:-0.38px;">$</div>
<div class="t " style="right:1142px;top:618px;letter-spacing:-0.38px;">50,000.00</div>
<div class="t " style="right:1047px;top:618px;letter-spacing:-0.38px;">$98,543.69</div>
<div class="t " style="right:945px;top:618px;letter-spacing:-0.38px;">$186.25</div>
<div class="t " style="left:656px;top:618px;letter-spacing:-0.38px;">$</div>
<div class="t " style="right:807px;top:618px;letter-spacing:-0.38px;">223.50</div>
<div class="t " style="left:794px;top:618px;letter-spacing:-0.38px;">$</div>
<div class="t " style="right:726px;top:618px;letter-spacing:-0.38px;">333.30</div>
<div class="t " style="left:875px;top:618px;letter-spacing:-0.38px;">$</div>
<div class="t " style="right:549px;top:618px;letter-spacing:-0.38px;">333.30</div>
<div class="t " style="left:32px;top:638px;letter-spacing:-0.38px;">$</div>
<div class="t " style="right:1437px;top:638px;letter-spacing:-0.38px;">1,182.21</div>
<div class="t " style="right:1218px;top:638px;letter-spacing:-0.38px;">20</div>
<div class="t " style="left:378px;top:638px;letter-spacing:-0.38px;">$</div>
<div class="t " style="right:1142px;top:638px;letter-spacing:-0.38px;">50,000.00</div>
<div class="t " style="right:1047px;top:638px;letter-spacing:-0.38px;">$50,000.00</div>
<div class="t " style="right:945px;top:638px;letter-spacing:-0.38px;">$105.50</div>
<div class="t " style="left:656px;top:638px;letter-spacing:-0.38px;">$</div>
<div class="t " style="right:807px;top:638px;letter-spacing:-0.38px;">126.60</div>
<div class="t " style="left:794px;top:638px;letter-spacing:-0.38px;">$</div>
<div class="t " style="right:726px;top:638px;letter-spacing:-0.38px;">248.51</div>
<div class="t " style="left:875px;top:638px;letter-spacing:-0.38px;">$</div>
<div class="t " style="right:549px;top:638px;letter-spacing:-0.38px;">248.51</div>
<div class="t " style="left:32px;top:658px;letter-spacing:-0.38px;">$</div>
<div class="t " style="right:1450px;top:658px;letter-spacing:-0.38px;">-</div>
<div class="t " style="right:1218px;top:658px;letter-spacing:-0.38px;">0</div>
<div class="t " style="left:378px;top:658px;letter-spacing:-0.38px;">$</div>
<div class="t " style="right:1155px;top:658px;letter-spacing:-0.38px;">-</div>
<div class="t " style="right:1047px;top:658px;letter-spacing:-0.38px;">$0.00</div>
<div class="t " style="right:945px;top:658px;letter-spacing:-0.38px;">$0.00</div>
<div class="t " style="left:656px;top:658px;letter-spacing:-0.38px;">$</div>
<div class="t " style="right:820px;top:658px;letter-spacing:-0.38px;">-</div>
<div class="t " style="left:794px;top:658px;letter-spacing:-0.38px;">$</div>
<div class="t " style="right:739px;top:658px;letter-spacing:-0.38px;">-</div>
<div class="t " style="left:875px;top:658px;letter-spacing:-0.38px;">$</div>
<div class="t " style="right:562px;top:658px;letter-spacing:-0.38px;">-</div>
<div class="t " style="left:32px;top:678px;letter-spacing:-0.38px;">$</div>
<div class="t " style="right:1450px;top:678px;letter-spacing:-0.38px;">-</div>
<div class="t " style="right:1218px;top:678px;letter-spacing:-0.38px;">0</div>
<div class="t " style="left:378px;top:678px;letter-spacing:-0.38px;">$</div>
<div class="t " style="right:1155px;top:678px;letter-spacing:-0.38px;">-</div>
<div class="t " style="right:1047px;top:678px;letter-spacing:-0.38px;">$0.00</div>
<div class="t " style="right:945px;top:678px;letter-spacing:-0.38px;">$0.00</div>
<div class="t " style="left:656px;top:678px;letter-spacing:-0.38px;">$</div>
<div class="t " style="right:820px;top:678px;letter-spacing:-0.38px;">-</div>
<div class="t " style="left:794px;top:678px;letter-spacing:-0.38px;">$</div>
<div class="t " style="right:739px;top:678px;letter-spacing:-0.38px;">-</div>
<div class="t " style="left:875px;top:678px;letter-spacing:-0.38px;">$</div>
<div class="t " style="right:562px;top:678px;letter-spacing:-0.38px;">-</div>
<div class="t " style="left:32px;top:698px;letter-spacing:-0.38px;">$</div>
<div class="t " style="right:1450px;top:698px;letter-spacing:-0.38px;">-</div>
<div class="t " style="right:1218px;top:698px;letter-spacing:-0.38px;">0</div>
<div class="t " style="left:378px;top:698px;letter-spacing:-0.38px;">$</div>
<div class="t " style="right:1155px;top:698px;letter-spacing:-0.38px;">-</div>
<div class="t " style="right:1047px;top:698px;letter-spacing:-0.38px;">$0.00</div>
<div class="t " style="right:945px;top:698px;letter-spacing:-0.38px;">$0.00</div>
<div class="t " style="left:656px;top:698px;letter-spacing:-0.38px;">$</div>
<div class="t " style="right:820px;top:698px;letter-spacing:-0.38px;">-</div>
<div class="t " style="left:794px;top:698px;letter-spacing:-0.38px;">$</div>
<div class="t " style="right:739px;top:698px;letter-spacing:-0.38px;">-</div>
<div class="t " style="left:875px;top:698px;letter-spacing:-0.38px;">$</div>
<div class="t " style="right:562px;top:698px;letter-spacing:-0.38px;">-</div>
<div class="t " style="left:32px;top:718px;letter-spacing:-0.38px;">$</div>
<div class="t " style="right:1450px;top:718px;letter-spacing:-0.38px;">-</div>
<div class="t " style="right:1218px;top:718px;letter-spacing:-0.38px;">0</div>
<div class="t " style="left:378px;top:718px;letter-spacing:-0.38px;">$</div>
<div class="t " style="right:1155px;top:718px;letter-spacing:-0.38px;">-</div>
<div class="t " style="right:1047px;top:718px;letter-spacing:-0.38px;">$0.00</div>
<div class="t " style="right:945px;top:718px;letter-spacing:-0.38px;">$0.00</div>
<div class="t " style="left:656px;top:718px;letter-spacing:-0.38px;">$</div>
<div class="t " style="right:820px;top:718px;letter-spacing:-0.38px;">-</div>
<div class="t " style="left:794px;top:718px;letter-spacing:-0.38px;">$</div>
<div class="t " style="right:739px;top:718px;letter-spacing:-0.38px;">-</div>
<div class="t " style="left:875px;top:718px;letter-spacing:-0.38px;">$</div>
<div class="t " style="right:562px;top:718px;letter-spacing:-0.38px;">-</div>
<svg class="chart" width="1586" height="755" viewBox="0 0 1586 755" style="position:absolute;left:0;top:0">
<rect x="1071.5" y="239.5" width="480" height="288" fill="#fff" stroke="#d9d9d9" stroke-width="1"/>
<line x1="1134.4" x2="1536.7" y1="466.5" y2="466.5" stroke="#d9d9d9" stroke-width="1"/>
<text x="1117" y="469.5" text-anchor="end" class="ax">$-</text>
<line x1="1134.4" x2="1536.7" y1="430.5" y2="430.5" stroke="#d9d9d9" stroke-width="1"/>
<text x="1121.5" y="433.5" text-anchor="end" class="ax">$100.00</text>
<line x1="1134.4" x2="1536.7" y1="395.5" y2="395.5" stroke="#d9d9d9" stroke-width="1"/>
<text x="1121.5" y="398.5" text-anchor="end" class="ax">$200.00</text>
<line x1="1134.4" x2="1536.7" y1="360.5" y2="360.5" stroke="#d9d9d9" stroke-width="1"/>
<text x="1121.5" y="363.5" text-anchor="end" class="ax">$300.00</text>
<line x1="1134.4" x2="1536.7" y1="324.5" y2="324.5" stroke="#d9d9d9" stroke-width="1"/>
<text x="1121.5" y="327.5" text-anchor="end" class="ax">$400.00</text>
<line x1="1134.4" x2="1536.7" y1="289.5" y2="289.5" stroke="#d9d9d9" stroke-width="1"/>
<text x="1121.5" y="292.5" text-anchor="end" class="ax">$500.00</text>
<line x1="1134.4" x2="1536.7" y1="254.5" y2="254.5" stroke="#d9d9d9" stroke-width="1"/>
<text x="1121.5" y="257.5" text-anchor="end" class="ax">$600.00</text>
<text x="1141.1" y="484.5" text-anchor="middle" class="ax">1</text>
<text x="1154.5" y="484.5" text-anchor="middle" class="ax">2</text>
<text x="1167.9" y="484.5" text-anchor="middle" class="ax">3</text>
<text x="1181.3" y="484.5" text-anchor="middle" class="ax">4</text>
<text x="1194.7" y="484.5" text-anchor="middle" class="ax">5</text>
<text x="1208.2" y="484.5" text-anchor="middle" class="ax">6</text>
<text x="1221.6" y="484.5" text-anchor="middle" class="ax">7</text>
<text x="1235.0" y="484.5" text-anchor="middle" class="ax">8</text>
<text x="1248.4" y="484.5" text-anchor="middle" class="ax">9</text>
<text x="1261.8" y="484.5" text-anchor="middle" class="ax">10</text>
<text x="1275.2" y="484.5" text-anchor="middle" class="ax">11</text>
<text x="1288.6" y="484.5" text-anchor="middle" class="ax">12</text>
<text x="1302.0" y="484.5" text-anchor="middle" class="ax">13</text>
<text x="1315.4" y="484.5" text-anchor="middle" class="ax">14</text>
<text x="1328.8" y="484.5" text-anchor="middle" class="ax">15</text>
<text x="1342.3" y="484.5" text-anchor="middle" class="ax">16</text>
<text x="1355.7" y="484.5" text-anchor="middle" class="ax">17</text>
<text x="1369.1" y="484.5" text-anchor="middle" class="ax">18</text>
<text x="1382.5" y="484.5" text-anchor="middle" class="ax">19</text>
<text x="1395.9" y="484.5" text-anchor="middle" class="ax">20</text>
<text x="1409.3" y="484.5" text-anchor="middle" class="ax">21</text>
<text x="1422.7" y="484.5" text-anchor="middle" class="ax">22</text>
<text x="1436.1" y="484.5" text-anchor="middle" class="ax">23</text>
<text x="1449.5" y="484.5" text-anchor="middle" class="ax">24</text>
<text x="1462.9" y="484.5" text-anchor="middle" class="ax">25</text>
<text x="1476.4" y="484.5" text-anchor="middle" class="ax">26</text>
<text x="1489.8" y="484.5" text-anchor="middle" class="ax">27</text>
<text x="1503.2" y="484.5" text-anchor="middle" class="ax">28</text>
<text x="1516.6" y="484.5" text-anchor="middle" class="ax">29</text>
<text x="1530.0" y="484.5" text-anchor="middle" class="ax">30</text>
<polyline points="1141.1,277.9 1154.5,277.9 1167.9,277.9 1181.3,277.9 1194.7,277.9 1208.2,277.9 1221.6,277.9 1235.0,277.9 1248.4,277.9 1261.8,277.9 1275.2,280.2 1288.6,281.7 1302.0,284.3 1315.4,285.0 1328.8,287.7 1342.3,293.7 1355.7,307.0 1369.1,324.7 1382.5,347.9 1395.9,377.9 1409.3,465.6 1422.7,465.6 1436.1,465.6 1449.5,465.6 1462.9,465.6 1476.4,465.6 1489.8,465.6 1503.2,465.6 1516.6,465.6 1530.0,465.6" fill="none" stroke="#e97132" stroke-width="2.9" stroke-linejoin="round" stroke-linecap="round"/>
<polyline points="1141.1,306.2 1154.5,288.5 1167.9,275.2 1181.3,266.2 1194.7,268.3 1208.2,268.9 1221.6,272.5 1235.0,276.9 1248.4,276.4 1261.8,277.5 1275.2,280.2 1288.6,281.7 1302.0,284.3 1315.4,285.0 1328.8,287.7 1342.3,293.7 1355.7,307.0 1369.1,324.7 1382.5,347.9 1395.9,377.9 1409.3,465.6 1422.7,465.6 1436.1,465.6 1449.5,465.6 1462.9,465.6 1476.4,465.6 1489.8,465.6 1503.2,465.6 1516.6,465.6 1530.0,465.6" fill="none" stroke="#4ea72e" stroke-width="2.9" stroke-linejoin="round" stroke-linecap="round"/>
<line x1="1207" x2="1233" y1="508" y2="508" stroke="#e97132" stroke-width="2.9" stroke-linecap="round"/>
<text x="1238" y="510.5" class="ax" letter-spacing="-0.1">Equalized</text>
<line x1="1304.5" x2="1330.5" y1="508" y2="508" stroke="#4ea72e" stroke-width="2.9" stroke-linecap="round"/>
<text x="1333" y="510.5" class="ax" letter-spacing="-0.28">Prem Adj. Loading</text>
</svg>
<div class="f" style="left:1578px;top:116px;width:20px;height:23px;box-sizing:border-box;border:2px solid #107c41"></div>
<!-- tab bar -->
<div class="f" style="left:0;top:727px;width:116px;height:28px;background:#e1e9ec;border-top-right-radius:5px;box-shadow:inset 0 1px 0 #dcdcdc"></div>
<div class="f" style="left:239px;top:727px;width:1347px;height:28px;background:#e1e9ec;border-top-left-radius:5px;box-shadow:inset 0 1px 0 #dcdcdc"></div>
<div class="f" style="left:116px;top:727px;width:123px;height:28px;background:#fff"></div>
<div class="tab" style="left:124px;font-size:14px;letter-spacing:0.35px;-webkit-text-stroke:0.45px #242424;color:#242424;top:727px">Individual Model</div>
<div class="f" style="left:124px;top:750px;width:107px;height:2px;background:#107c41"></div>
<div class="tab" style="left:257px;top:729px;letter-spacing:0.4px">Mortality</div>
<div class="tab" style="left:340px;top:729px;letter-spacing:-0.1px">Company model VBA</div>
<div class="tab" style="left:500px;top:729px;letter-spacing:-0.2px">Policies</div>
<div class="tab" style="left:573px;top:729px">Metrics</div>
<div class="tab" style="left:646px;top:729px">Metrics (2)</div>
<div class="f" style="left:243px;top:734px;width:1px;height:18px;background:#c8cccf"></div>
<div class="f" style="left:327px;top:734px;width:1px;height:18px;background:#c8cccf"></div>
<div class="f" style="left:487px;top:734px;width:1px;height:18px;background:#c8cccf"></div>
<div class="f" style="left:560px;top:734px;width:1px;height:18px;background:#c8cccf"></div>
<div class="f" style="left:632px;top:734px;width:1px;height:18px;background:#c8cccf"></div>
<div class="f" style="left:725px;top:734px;width:1px;height:18px;background:#c8cccf"></div>
<svg class="f" style="left:764px;top:735px" width="16" height="16"><path d="M8 1.5V14.5M1.5 8H14.5" stroke="#303030" stroke-width="1.2" fill="none"/></svg>
<svg class="f" style="left:0;top:727px" width="116" height="28"><path d="M34.8 11 L28.8 15.5 L34.8 20" stroke="#707070" stroke-width="1.2" fill="none"/><path d="M61.2 11 L67.2 15.5 L61.2 20" stroke="#707070" stroke-width="1.2" fill="none"/></svg>
<div class="f" style="left:1154px;top:739px;width:3px;height:3px;background:#222;border-radius:1px"></div>
<div class="f" style="left:1154px;top:743px;width:3px;height:3px;background:#222;border-radius:1px"></div>
<div class="f" style="left:1154px;top:747px;width:3px;height:3px;background:#222;border-radius:1px"></div>
<div class="f" style="left:1171px;top:734px;width:430px;height:17px;background:#f3f3f3;border-radius:9px"></div>
<svg class="f" style="left:1175px;top:737px" width="10" height="11"><path d="M8.5 0.5 L2 5.5 L8.5 10.5 Z" fill="#717171"/></svg>
<div class="f" style="left:1188px;top:738px;width:420px;height:9px;background:#717171;border-radius:5px"></div>
</body></html>
